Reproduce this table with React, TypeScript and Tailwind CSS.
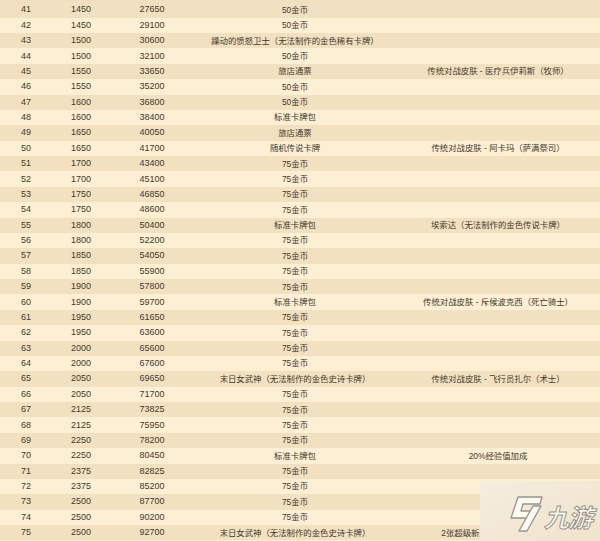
import React from "react";

type Row = [number, number, number, string, string];

const rows: Row[] = [
  [41, 1450, 27650, "50金币", ""],
  [42, 1450, 29100, "50金币", ""],
  [43, 1500, 30600, "躁动的愤怒卫士（无法制作的金色稀有卡牌）", ""],
  [44, 1500, 32100, "50金币", ""],
  [45, 1550, 33650, "旅店通票", "传统对战皮肤 - 医疗兵伊莉斯（牧师）"],
  [46, 1550, 35200, "50金币", ""],
  [47, 1600, 36800, "50金币", ""],
  [48, 1600, 38400, "标准卡牌包", ""],
  [49, 1650, 40050, "旅店通票", ""],
  [50, 1650, 41700, "随机传说卡牌", "传统对战皮肤 - 阿卡玛（萨满祭司）"],
  [51, 1700, 43400, "75金币", ""],
  [52, 1700, 45100, "75金币", ""],
  [53, 1750, 46850, "75金币", ""],
  [54, 1750, 48600, "75金币", ""],
  [55, 1800, 50400, "标准卡牌包", "埃索达（无法制作的金色传说卡牌）"],
  [56, 1800, 52200, "75金币", ""],
  [57, 1850, 54050, "75金币", ""],
  [58, 1850, 55900, "75金币", ""],
  [59, 1900, 57800, "75金币", ""],
  [60, 1900, 59700, "标准卡牌包", "传统对战皮肤 - 斥候波克西（死亡骑士）"],
  [61, 1950, 61650, "75金币", ""],
  [62, 1950, 63600, "75金币", ""],
  [63, 2000, 65600, "75金币", ""],
  [64, 2000, 67600, "75金币", ""],
  [65, 2050, 69650, "末日女武神（无法制作的金色史诗卡牌）", "传统对战皮肤 - 飞行员扎尔（术士）"],
  [66, 2050, 71700, "75金币", ""],
  [67, 2125, 73825, "75金币", ""],
  [68, 2125, 75950, "75金币", ""],
  [69, 2250, 78200, "75金币", ""],
  [70, 2250, 80450, "标准卡牌包", "20%经验值加成"],
  [71, 2375, 82825, "75金币", ""],
  [72, 2375, 85200, "75金币", ""],
  [73, 2500, 87700, "75金币", ""],
  [74, 2500, 90200, "75金币", ""],
  [75, 2500, 92700, "末日女武神（无法制作的金色史诗卡牌）", "2张超级新卡牌包（标准模式）"],
];

export default function App() {
  return (
    <div
      className="relative w-[600px] h-[541px] overflow-hidden bg-[#fcefd4] text-[#44392d]"
      style={{ fontFamily: '"Liberation Sans", "Noto Sans CJK SC", sans-serif' }}
    >
      <div className="h-[2.3px] bg-[#f0e0c1]" />
      {rows.map((r) => (
        <div
          key={r[0]}
          className={
            "grid grid-cols-[52px_58px_84px_202px_204px] h-[15.38px] items-center leading-none " +
            (r[0] % 2 === 1 ? "bg-[#f1e1c1]" : "bg-[#fcefd4]")
          }
        >
          <div className="text-center text-[9px]">{r[0]}</div>
          <div className="text-center text-[9px]">{r[1]}</div>
          <div className="text-center text-[9px]">{r[2]}</div>
          <div className="text-center text-[8.4px] whitespace-nowrap">{r[3]}</div>
          <div className="text-center text-[8.4px] whitespace-nowrap">{r[4]}</div>
        </div>
      ))}

      <div className="absolute left-[480px] top-[481px] w-[120px] h-[60px] bg-gradient-to-br from-[#f6eddd] to-[#efe3cd]">
        <svg
          className="absolute left-[28px] top-[15px]"
          width="36"
          height="36"
          viewBox="0 0 36 36"
        >
          <path
            d="M10 1 L34 1 L32 8 L15 8 L13 15 L24 15 L22 22 L3 22 Z"
            fill="#fcf9f3"
            stroke="#99948b"
            strokeWidth="1.3"
            strokeLinejoin="round"
          />
          <path
            d="M25 10 L33 10 L19 35 L11 35 Z"
            fill="#fcf9f3"
            stroke="#99948b"
            strokeWidth="1.3"
            strokeLinejoin="round"
          />
        </svg>
        <div
          className="absolute left-[64px] top-[23px] text-[25px] leading-none italic font-bold text-[#fcf9f3] [-webkit-text-stroke:1px_#99948b] tracking-[-1px]"
          style={{ fontFamily: '"Noto Sans CJK SC", sans-serif' }}
        >
          九游
        </div>
      </div>
    </div>
  );
}
